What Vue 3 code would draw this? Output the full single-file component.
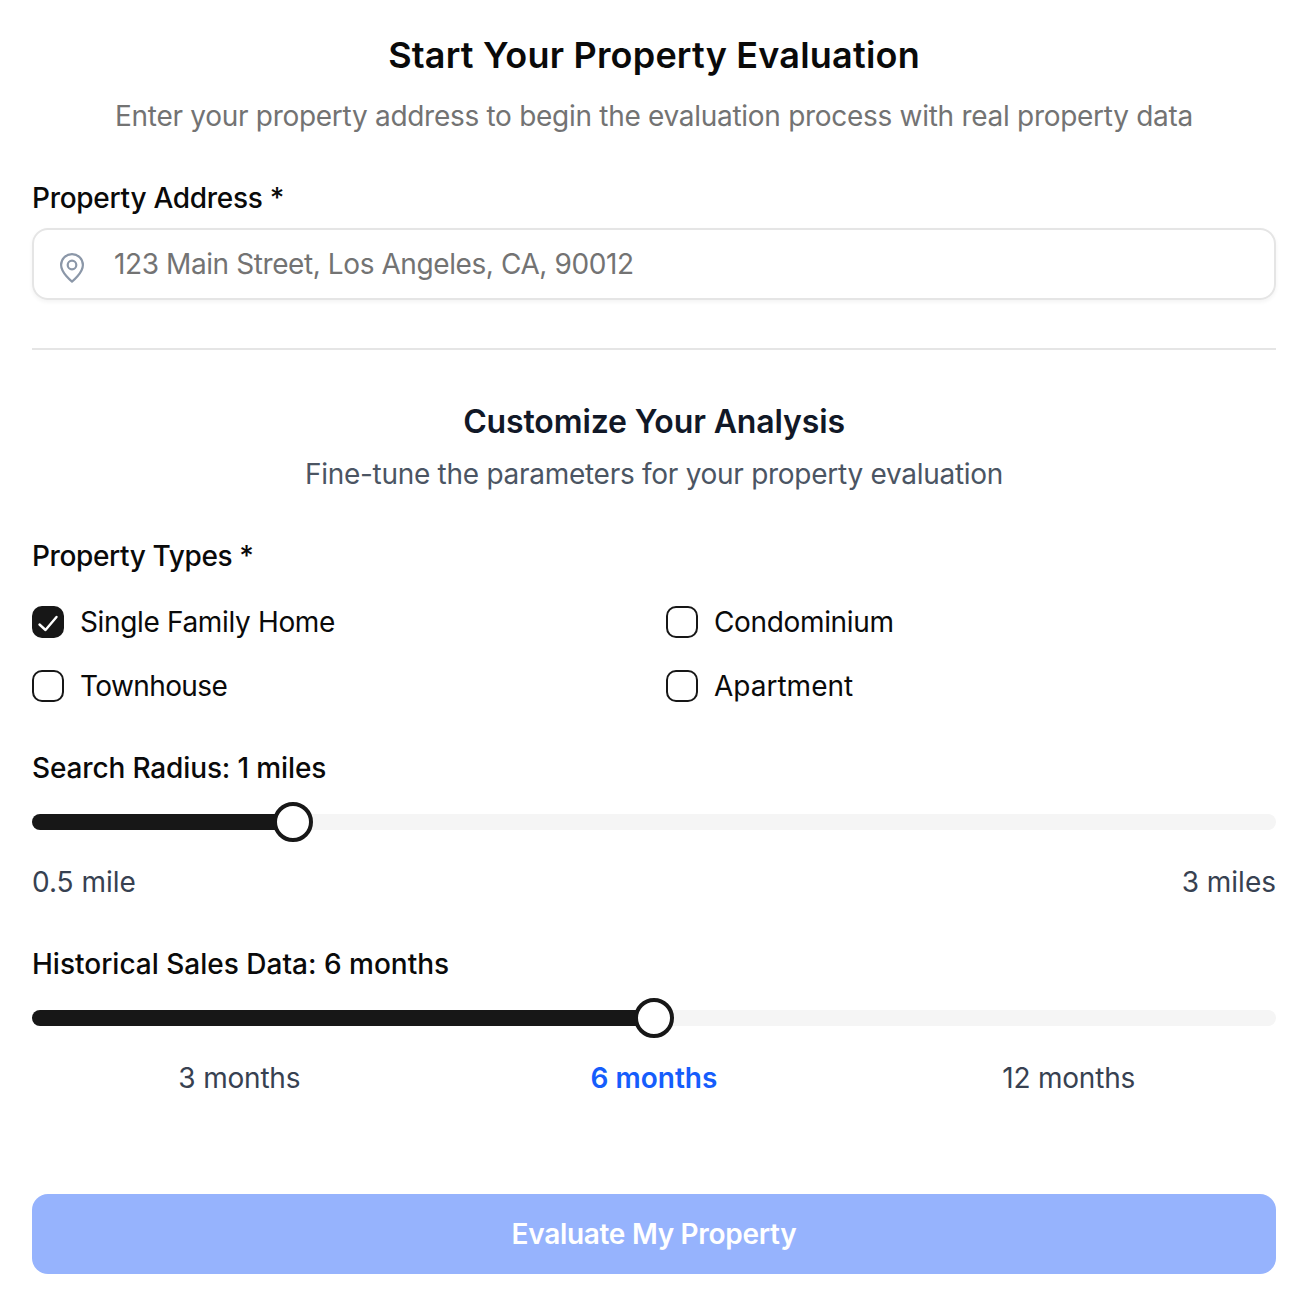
<script setup>
import { ref } from 'vue'

const propertyTypes = ref([
  { label: 'Single Family Home', checked: true, spacing: 'tight' },
  { label: 'Condominium', checked: false, spacing: 'tight' },
  { label: 'Townhouse', checked: false, spacing: 'tighter' },
  { label: 'Apartment', checked: false, spacing: '' }
])

const radiusPos = 261
const monthsPos = 622

const months = [
  { label: '3 months', active: false },
  { label: '6 months', active: true },
  { label: '12 months', active: false }
]
</script>

<template>
  <main class="page">
    <h1 class="title">Start Your Property Evaluation</h1>
    <p class="subtitle">Enter your property address to begin the evaluation process with real property data</p>

    <label class="label address-label" for="address">Property Address *</label>
    <div class="input-box">
      <svg class="pin" viewBox="0 0 24 32" fill="none" stroke="#8b97a8" stroke-width="2.2" stroke-linejoin="round">
        <path d="M12 30.600C12 30.600 1.100 22 1.100 14a10.900 10.900 0 0 1 21.800 0c0 8-10.900 16.600-10.900 16.600Z" />
        <circle cx="12" cy="14" r="4.300" />
      </svg>
      <input id="address" class="input" type="text" placeholder="123 Main Street, Los Angeles, CA, 90012" />
    </div>

    <hr class="divider" />

    <h2 class="section-title">Customize Your Analysis</h2>
    <p class="section-sub">Fine-tune the parameters for your property evaluation</p>

    <div class="label types-label">Property Types *</div>
    <div class="types">
      <label v-for="t in propertyTypes" :key="t.label" class="type" :class="t.spacing">
        <span class="box" :class="{ checked: t.checked }" @click="t.checked = !t.checked">
          <svg v-if="t.checked" viewBox="0 0 32 32" fill="none" stroke="#fff" stroke-width="2.400" stroke-linecap="round" stroke-linejoin="round">
            <path d="M7.500 18.500L13.500 24L24.500 11" />
          </svg>
        </span>
        {{ t.label }}
      </label>
    </div>

    <div class="label radius-label">Search Radius: 1 miles</div>
    <div class="slider">
      <div class="fill" :style="{ width: radiusPos + 'px' }"></div>
      <div class="thumb" :style="{ left: radiusPos - 20 + 'px' }"></div>
    </div>
    <div class="ends">
      <span>0.5 mile</span>
      <span>3 miles</span>
    </div>

    <div class="label sales-label">Historical Sales Data: 6 months</div>
    <div class="slider">
      <div class="fill" :style="{ width: monthsPos + 'px' }"></div>
      <div class="thumb" :style="{ left: monthsPos - 20 + 'px' }"></div>
    </div>
    <div class="months">
      <span v-for="m in months" :key="m.label" :class="{ active: m.active }">{{ m.label }}</span>
    </div>

    <button type="button" class="submit">Evaluate My Property</button>
  </main>
</template>

<style scoped>
.page {
  box-sizing: border-box;
  width: 1298px;
  height: 1294px;
  padding: 31px 22px 0 32px;
  background: #fff;
  color: #0a0a0a;
  font-family: Inter, "Liberation Sans", sans-serif;
}

.title {
  margin: 0;
  height: 48px;
  line-height: 48px;
  font-size: 36px;
  font-weight: 600;
  letter-spacing: 0.2px;
  text-align: center;
}

.subtitle {
  margin: 17px 0 0;
  line-height: 40px;
  font-size: 28px;
  letter-spacing: -0.29px;
  color: #737373;
  text-align: center;
}

.label {
  display: block;
  line-height: 40px;
  font-size: 28px;
  font-weight: 500;
}

.address-label {
  margin-top: 42px;
  letter-spacing: -0.28px;
}

.input-box {
  box-sizing: border-box;
  display: flex;
  align-items: center;
  height: 72px;
  margin-top: 10px;
  padding-left: 26px;
  border: 2px solid #e5e5e5;
  border-radius: 16px;
  box-shadow: 0 2px 4px rgba(0, 0, 0, 0.05);
}

.pin {
  flex-shrink: 0;
  width: 24px;
  height: 32px;
  margin-top: 6px;
}

.input {
  flex: 1;
  min-width: 0;
  margin-left: 30px;
  padding: 0;
  border: none;
  outline: none;
  background: transparent;
  font: inherit;
  font-size: 28px;
  letter-spacing: -0.41px;
}

.input::placeholder {
  color: #737373;
  opacity: 1;
}

.divider {
  height: 2px;
  margin: 48px 0 0;
  border: none;
  background: #e5e5e5;
}

.section-title {
  margin: 52px 0 0;
  line-height: 40px;
  font-size: 32px;
  font-weight: 600;
  letter-spacing: -0.13px;
  color: #111827;
  text-align: center;
}

.section-sub {
  margin: 12px 0 0;
  line-height: 40px;
  font-size: 28px;
  letter-spacing: -0.28px;
  color: #4b5563;
  text-align: center;
}

.types-label {
  margin-top: 42px;
  letter-spacing: -0.37px;
}

.types {
  display: grid;
  grid-template-columns: 634px 1fr;
  row-gap: 24px;
  margin-top: 26px;
}

.type {
  display: flex;
  align-items: center;
  gap: 16px;
  height: 40px;
  font-size: 28px;
}

.type.tight {
  letter-spacing: -0.35px;
}

.type.tighter {
  letter-spacing: -0.6px;
}

.box {
  box-sizing: border-box;
  flex-shrink: 0;
  width: 32px;
  height: 32px;
  border: 2px solid #171717;
  border-radius: 10px;
}

.box.checked {
  background: #171717;
}

.box svg {
  display: block;
  width: 32px;
  height: 32px;
  margin: -2px;
}

.radius-label {
  margin-top: 42px;
  letter-spacing: -0.14px;
}

.slider {
  position: relative;
  height: 16px;
  margin-top: 26px;
  border-radius: 8px;
  background: #f5f5f5;
}

.fill {
  height: 100%;
  border-radius: 8px;
  background: #171717;
}

.thumb {
  box-sizing: border-box;
  position: absolute;
  top: -12px;
  width: 40px;
  height: 40px;
  border: 4px solid #171717;
  border-radius: 50%;
  background: #fff;
}

.ends {
  display: flex;
  justify-content: space-between;
  margin-top: 32px;
  line-height: 40px;
  font-size: 28px;
  color: #374151;
}

.sales-label {
  margin-top: 42px;
}

.months {
  display: grid;
  grid-template-columns: repeat(3, 1fr);
  margin-top: 32px;
  line-height: 40px;
  font-size: 28px;
  letter-spacing: -0.2px;
  color: #374151;
  text-align: center;
}

.months .active {
  font-weight: 600;
  letter-spacing: 0;
  color: #155dfc;
}

.submit {
  display: block;
  width: 100%;
  height: 80px;
  margin-top: 96px;
  padding: 0;
  border: none;
  border-radius: 16px;
  background: #96b3fd;
  color: #fff;
  font: inherit;
  font-size: 28px;
  font-weight: 600;
  letter-spacing: -0.3px;
}
</style>
